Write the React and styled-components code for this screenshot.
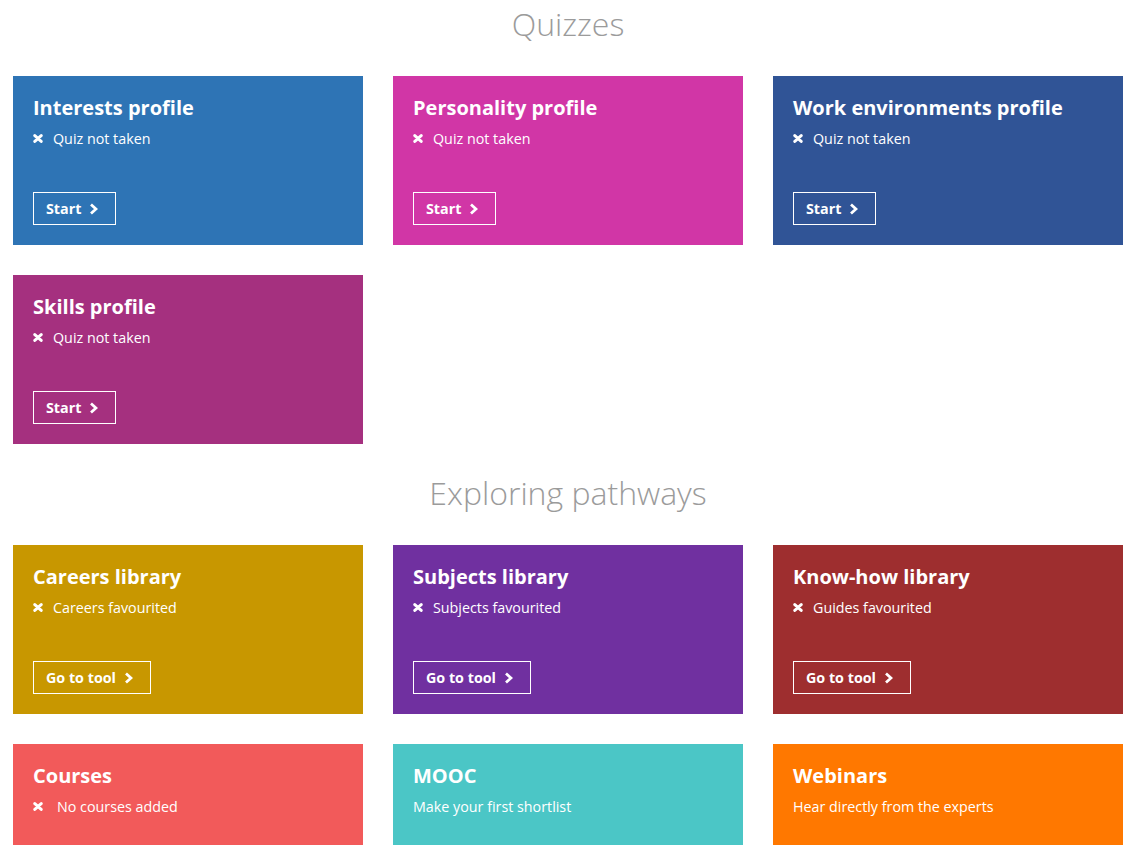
import React from 'react';
import styled, { createGlobalStyle } from 'styled-components';

const GlobalStyle = createGlobalStyle`
  *, *::before, *::after { box-sizing: border-box; }
  body {
    margin: 0;
    background: #fff;
    font-family: "Open Sans", "Liberation Sans", sans-serif;
  }
  h1, h2, h3, p { margin: 0; }
`

const PAGE = styled.div`
  width: 1110px;
  margin-left: 13px;
  padding-top: 2px;
`

const HEADING = styled.h1`
  font-size: 32px;
  line-height: 44px;
  font-weight: 300;
  color: #9b9b9b;
  text-align: center;
  margin: ${props => (props.first ? '0' : '27px')} 0 30px;
`

const GRID = styled.div`
  display: grid;
  grid-template-columns: repeat(3, 350px);
  gap: 30px;
`

const CARD = styled.div`
  display: flex;
  flex-direction: column;
  height: 169px;
  padding: 19px 20px 20px;
  background: ${props => props.color};
  color: #fff;
`

const TITLE = styled.h3`
  font-size: 20px;
  line-height: 26px;
  font-weight: 700;
`

const STATUS = styled.p`
  display: flex;
  align-items: center;
  margin-top: 8px;
  font-size: 14.3px;
  line-height: 19px;
`

const CROSS = styled.svg`
  width: 10px;
  height: 9px;
  margin-right: ${props => props.gap}px;
  flex: none;
`

const BUTTON = styled.a`
  display: inline-flex;
  align-items: center;
  align-self: flex-start;
  margin-top: auto;
  height: 33px;
  padding: 0 17px 0 12px;
  border: 1px solid #fff;
  font-size: 14.3px;
  font-weight: 700;
  color: #fff;
  text-decoration: none;
  cursor: pointer;
`

const CHEVRON = styled.svg`
  width: 9px;
  height: 12px;
  margin-left: 8px;
`

const Cross = ({ gap = 10 }) => (
  <CROSS gap={gap} viewBox="0 0 10 9">
    <path d="M1.8 1.6 L8.2 7.4 M8.2 1.6 L1.8 7.4" stroke="#fff" strokeWidth="3" strokeLinecap="round" />
  </CROSS>
);

const Chevron = () => (
  <CHEVRON viewBox="0 0 9 12">
    <path d="M2 1.5 L7 6 L2 10.5" stroke="#fff" strokeWidth="2.8" fill="none" />
  </CHEVRON>
);

const Card = ({ item }) => (
  <CARD color={item.color}>
    <TITLE>{item.title}</TITLE>
    <STATUS>
      {item.cross !== false && <Cross gap={item.gap} />}
      {item.text}
    </STATUS>
    {item.button && (
      <BUTTON>
        {item.button}
        <Chevron />
      </BUTTON>
    )}
  </CARD>
);

const quizzes = [
  { title: 'Interests profile', text: 'Quiz not taken', button: 'Start', color: '#2e74b5' },
  { title: 'Personality profile', text: 'Quiz not taken', button: 'Start', color: '#d136a6' },
  { title: 'Work environments profile', text: 'Quiz not taken', button: 'Start', color: '#305496' },
  { title: 'Skills profile', text: 'Quiz not taken', button: 'Start', color: '#a5307f' },
];

const pathways = [
  { title: 'Careers library', text: 'Careers favourited', button: 'Go to tool', color: '#c89700' },
  { title: 'Subjects library', text: 'Subjects favourited', button: 'Go to tool', color: '#7030a0' },
  { title: 'Know-how library', text: 'Guides favourited', button: 'Go to tool', color: '#9e2e2f' },
  { title: 'Courses', text: 'No courses added', gap: 14, color: '#f25a5a' },
  { title: 'MOOC', text: 'Make your first shortlist', cross: false, color: '#4bc6c6' },
  { title: 'Webinars', text: 'Hear directly from the experts', cross: false, color: '#ff7800' },
];

export default function App() {
  return (
    <PAGE>
      <GlobalStyle />
      <HEADING first>Quizzes</HEADING>
      <GRID>
        {quizzes.map(item => <Card key={item.title} item={item} />)}
      </GRID>
      <HEADING>Exploring pathways</HEADING>
      <GRID>
        {pathways.map(item => <Card key={item.title} item={item} />)}
      </GRID>
    </PAGE>
  );
}
